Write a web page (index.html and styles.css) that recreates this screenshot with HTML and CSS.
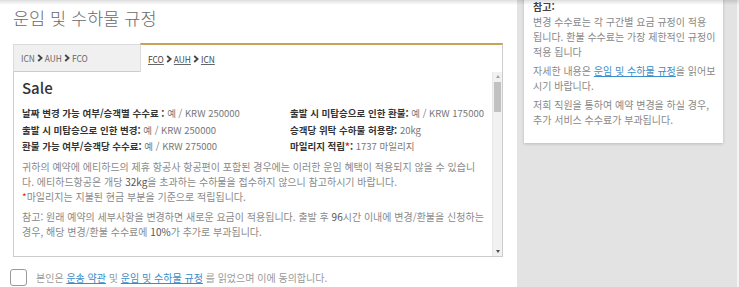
FILE: index.html
```html
<!DOCTYPE html>
<html lang="ko">
<head>
    <meta charset="UTF-8">
    <meta name="viewport" content="width=device-width, initial-scale=1.0">
    <title>운임 및 수하물 규정</title>
    <link rel="stylesheet" href="styles.css">
</head>
<body>
    <div class="page">
        <main class="main">
            <h1 class="title">운임 및 수하물 규정</h1>

            <div class="fare">
                <div class="tabs">
                    <div class="tab">
                        ICN <svg class="chev" viewBox="0 0 6 8"><path d="M1.2 1 L4.6 4 L1.2 7"/></svg>
                        AUH <svg class="chev" viewBox="0 0 6 8"><path d="M1.2 1 L4.6 4 L1.2 7"/></svg>
                        FCO
                    </div>
                    <div class="tab active">
                        <u>FCO</u> <svg class="chev" viewBox="0 0 6 8"><path d="M1.2 1 L4.6 4 L1.2 7"/></svg>
                        <u>AUH</u> <svg class="chev" viewBox="0 0 6 8"><path d="M1.2 1 L4.6 4 L1.2 7"/></svg>
                        <u>ICN</u>
                    </div>
                </div>

                <div class="rules">
                    <div class="rules-body">
                        <h2>Sale</h2>
                        <div class="facts">
                            <div><b>날짜 변경 가능 여부/승객별 수수료 :</b> 예 / KRW 250000</div>
                            <div><b>출발 시 미탑승으로 인한 환불:</b> 예 / KRW 175000</div>
                            <div><b>출발 시 미탑승으로 인한 변경:</b> 예 / KRW 250000</div>
                            <div><b>승객당 위탁 수하물 허용량:</b> 20kg</div>
                            <div><b>환불 가능 여부/승객당 수수료:</b> 예 / KRW 275000</div>
                            <div><b>마일리지 적립<span class="star">*</span>:</b> 1737 마일리지</div>
                        </div>
                        <p>귀하의 예약에 에티하드의 제휴 항공사 항공편이 포함된 경우에는 이러한 운임 혜택이 적용되지 않을 수 있습니<br>다. 에티하드항공은 개당 <span class="num">32kg</span>을 초과하는 수하물을 접수하지 않으니 참고하시기 바랍니다.<br><span class="star">*</span>마일리지는 지불된 현금 부분을 기준으로 적립됩니다.</p>
                        <p class="note">참고: 원래 예약의 세부사항을 변경하면 새로운 요금이 적용됩니다. 출발 후 <span class="num">96</span>시간 이내에 변경/환불을 신청하는<br>경우, 해당 변경/환불 수수료에 <span class="num">10%</span>가 추가로 부과됩니다.</p>
                    </div>
                    <div class="scrollbar">
                        <span class="arrow up"></span>
                        <span class="thumb"></span>
                        <span class="track"></span>
                        <span class="arrow down"></span>
                    </div>
                </div>
            </div>

            <label class="agree">
                <span class="checkbox"></span>
                <span>본인은 <a href="#">운송 약관</a> 및 <a href="#">운임 및 수하물 규정</a> 를 읽었으며 이에 동의합니다.</span>
            </label>
        </main>

        <aside class="side">
            <div class="note-card">
                <p><strong>참고:</strong><br>변경 수수료는 각 구간별 요금 규정이 적용 됩니다. 환불 수수료는 가장 제한적인 규정이 적용 됩니다</p>
                <p>자세한 내용은 <a href="#">운임 및 수하물 규정</a>을 읽어보시기 바랍니다.</p>
                <p>저희 직원을 통하여 예약 변경을 하실 경우, 추가 서비스 수수료가 부과됩니다.</p>
            </div>
        </aside>
    </div>
</body>
</html>
```

FILE: styles.css
```css
body {
    margin: 0;
    font-family: "Noto Sans CJK KR", "Noto Sans", sans-serif;
    background-color: #ffffff;
    overflow: hidden;
}
.page {
    display: flex;
    height: 287px;
}
/* shadow cast by the header above */
.page::before {
    content: "";
    position: fixed;
    top: 0;
    left: 0;
    right: 0;
    height: 5px;
    background: linear-gradient(rgba(0, 0, 0, 0.13), rgba(0, 0, 0, 0));
    z-index: 2;
}
.main {
    width: 517px;
    flex-shrink: 0;
    box-sizing: border-box;
    padding: 6px 14px 0 10px;
}
.title {
    margin: 0 0 13px 3px;
    font-size: 17.5px;
    font-weight: 300;
    line-height: 24px;
    color: #6a6a6a;
}
.fare {
    margin-left: 3px;
}
.tabs {
    display: flex;
    height: 29px;
}
.tab {
    width: 127px;
    box-sizing: border-box;
    margin-top: 1px;
    padding-left: 7px;
    display: flex;
    align-items: center;
    gap: 2px;
    background-color: #f0f0f0;
    border: 1px solid #dcdcdc;
    border-right: none;
    border-bottom: 1px solid #cccccc;
    font-size: 8.4px;
    color: #666;
}
.tab.active {
    flex: 1;
    margin-top: 0;
    background-color: #ffffff;
    border: none;
    border-top: 2px solid #c9a355;
    border-left: 1px solid #dcdcdc;
    border-right: 1px solid #cccccc;
    color: #444;
}
.tab u {
    text-decoration-color: #666;
}
.chev {
    width: 6px;
    height: 8px;
    fill: none;
    stroke: #444;
    stroke-width: 1.8;
}
.rules {
    display: flex;
    height: 185px;
    box-sizing: border-box;
    border: 1px solid #cccccc;
    border-top: none;
}
.rules-body {
    flex: 1;
    padding: 6px 4px 0 8px;
    overflow: hidden;
}
.rules-body h2 {
    margin: 0 0 7px;
    font-size: 15px;
    font-weight: 500;
    line-height: 20px;
    color: #333;
}
.facts {
    display: grid;
    grid-template-columns: 268px 1fr;
    font-size: 9.5px;
    line-height: 16.5px;
    color: #777;
    white-space: nowrap;
}
.facts b {
    color: #333;
    font-weight: 700;
}
.star {
    color: #e0262b;
}
.rules-body p {
    margin: 4px 0 0;
    font-size: 10px;
    line-height: 15px;
    color: #8a8a8a;
    white-space: nowrap;
}
.rules-body p.note {
    margin-top: 5px;
}
.num {
    color: #555;
}
.scrollbar {
    width: 9px;
    display: flex;
    flex-direction: column;
    background-color: #f1f1f1;
    border-left: 1px solid #e6e6e6;
}
.arrow {
    height: 9px;
    display: flex;
    align-items: center;
    justify-content: center;
}
.arrow::after {
    content: "";
    border-left: 2.5px solid transparent;
    border-right: 2.5px solid transparent;
}
.arrow.up::after {
    border-bottom: 3px solid #a3a3a3;
}
.arrow.down::after {
    border-top: 3px solid #505050;
}
.thumb {
    height: 30px;
    margin: 1px 1px 0;
    background-color: #c1c1c1;
}
.track {
    flex: 1;
}
.agree {
    display: flex;
    align-items: center;
    gap: 9px;
    margin-top: 12px;
    font-size: 10px;
    color: #999;
}
.checkbox {
    width: 17px;
    height: 17px;
    box-sizing: border-box;
    border: 1px solid #9a9a9a;
    border-radius: 3px;
    background-color: #fff;
}
a {
    color: #3a8dc8;
}
.side {
    flex: 1;
    padding: 0 14px 0 7px;
    background-color: #e3e3e3;
    border-right: 2px solid #f4f4f4;
}
.note-card {
    margin-top: -7px;
    padding: 6px 7px 16px 9px;
    background-color: #ffffff;
    box-shadow: 0 1px 3px rgba(0, 0, 0, 0.18);
    font-size: 10px;
    line-height: 15px;
    color: #888;
}
.note-card p {
    margin: 0 0 4px;
}
.note-card p:last-child {
    margin-bottom: 0;
}
.note-card strong {
    color: #444;
}
```
